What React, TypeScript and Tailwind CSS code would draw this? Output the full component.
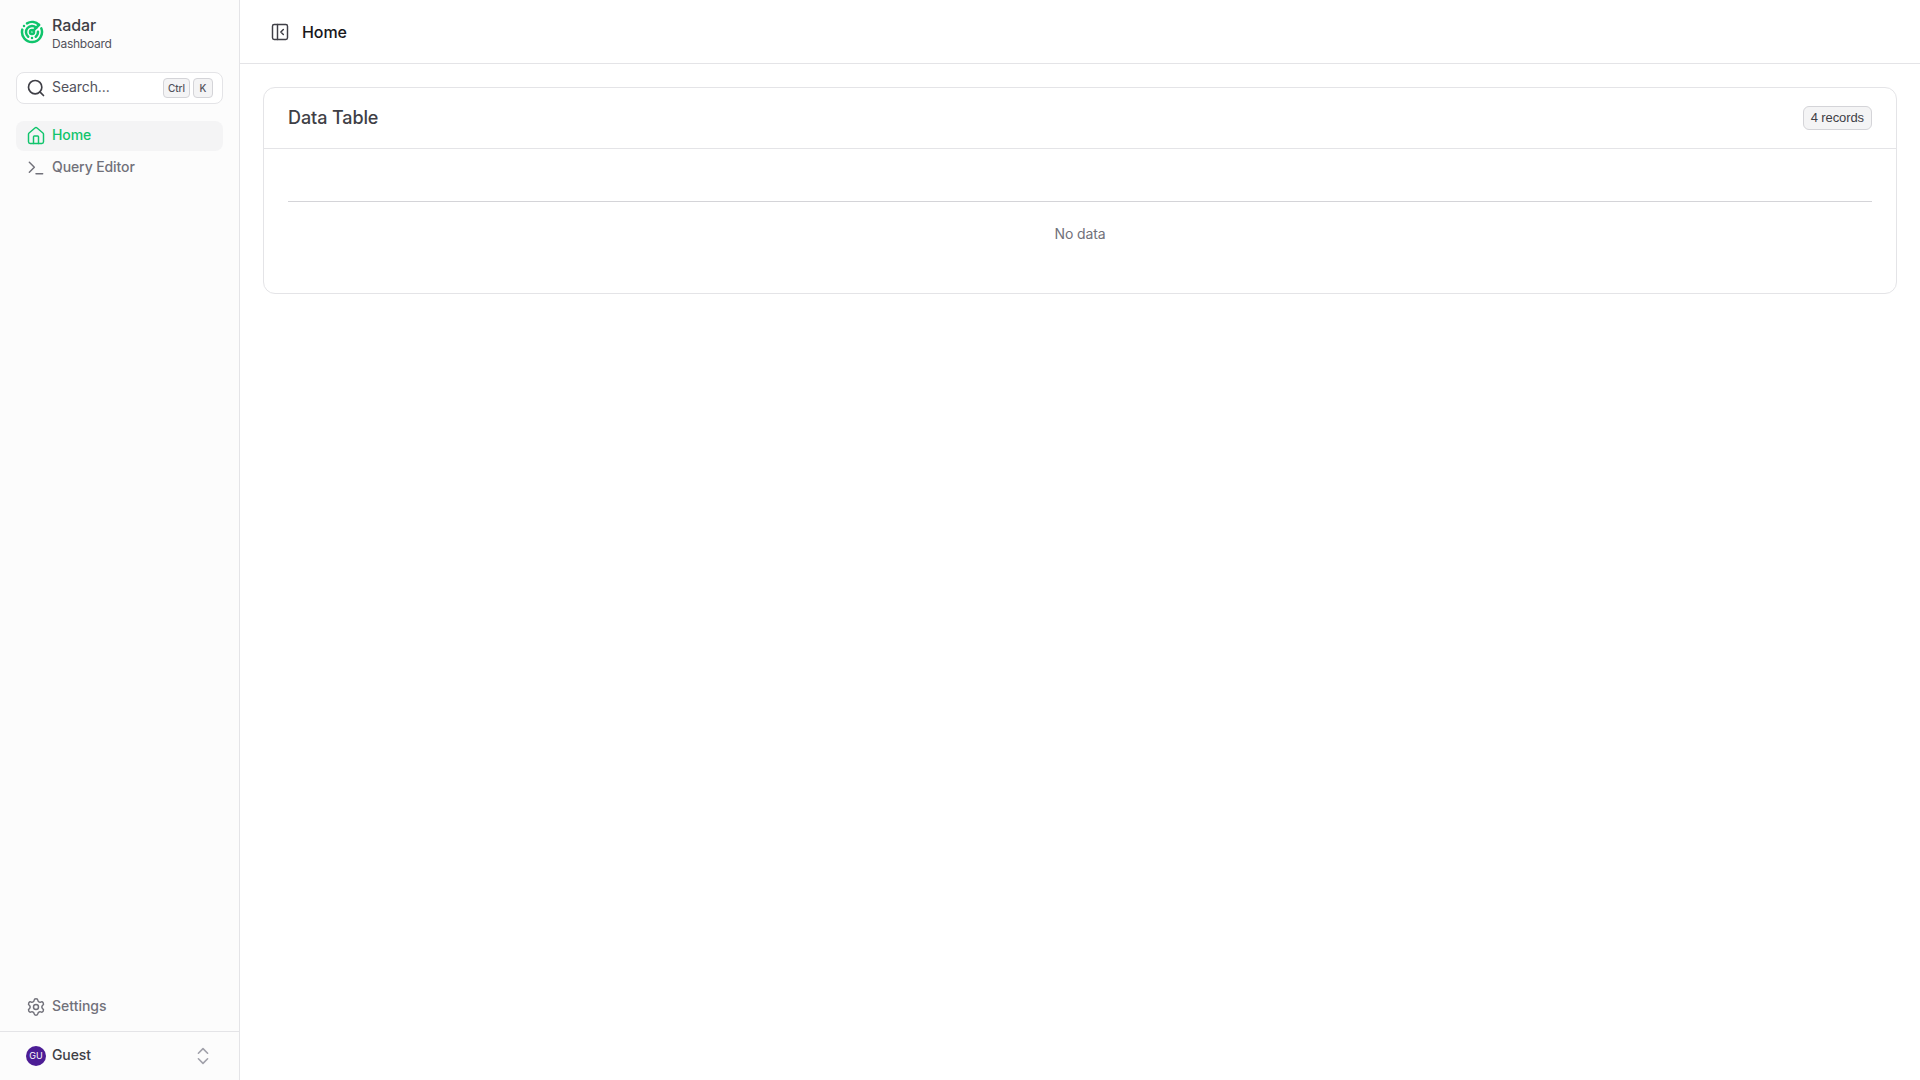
import { ChevronsUpDown, House, PanelLeftClose, Radar, Search, Settings, Terminal } from "lucide-react";

export default function App() {
  return (
    <div className="flex h-screen w-full bg-white font-['Inter',sans-serif] tracking-[-0.1px] text-[#3f3f46]">
      {/* Sidebar */}
      <aside className="flex w-[240px] shrink-0 flex-col border-r border-[#e4e4e7] bg-[#fcfcfc]">
        <div className="flex h-[64px] items-center gap-2 px-5">
          <Radar className="size-6 text-[#10c46c]" strokeWidth={2.5} />
          <div className="flex flex-col pb-[1px]">
            <span className="text-base leading-[24px] font-medium text-[#3f3f46]">Radar</span>
            <span className="text-xs leading-[14px] tracking-[-0.25px] text-[#52525b]">Dashboard</span>
          </div>
        </div>

        <div className="mx-4 mt-[8px] flex h-[32px] items-center gap-[6px] rounded-lg border border-[#e4e4e7] bg-white pr-[9px] pl-[9px]">
          <Search className="size-5 text-[#3f3f46]" strokeWidth={2} />
          <span className="flex-1 pb-[2px] text-sm text-[#52525b]">Search...</span>
          <kbd className="flex h-[20px] w-[27px] items-center justify-center rounded-[4px] border border-[#d4d4d8] bg-[#f4f4f5] font-['Inter',sans-serif] text-[10px] font-medium text-[#52525b]">
            Ctrl
          </kbd>
          <kbd className="-ml-[3px] flex h-[20px] w-[20px] items-center justify-center rounded-[4px] border border-[#d4d4d8] bg-[#f4f4f5] font-['Inter',sans-serif] text-[10px] font-medium text-[#52525b]">
            K
          </kbd>
        </div>

        <nav className="mx-4 mt-[17px] flex flex-col gap-[2px]">
          <a className="flex h-[30px] items-center gap-[6px] rounded-lg bg-[#f4f4f5] px-[10px] text-sm font-medium text-[#10c46c]">
            <House className="size-5" strokeWidth={1.75} />
            <span className="pb-[2px]">Home</span>
          </a>
          <a className="flex h-[30px] items-center gap-[6px] rounded-lg px-[10px] text-sm font-medium text-[#71717a]">
            <Terminal className="size-5" strokeWidth={1.75} />
            <span className="pb-[2px]">Query Editor</span>
          </a>
        </nav>

        <div className="mt-auto px-4 pb-[9px]">
          <a className="flex h-[30px] items-center gap-[6px] px-[10px] text-sm font-medium tracking-normal text-[#71717a]">
            <Settings className="size-5" strokeWidth={1.75} />
            <span className="pb-[2px]">Settings</span>
          </a>
        </div>

        <div className="flex h-[49px] items-center border-t border-[#e4e4e7] pr-[25px] pl-[26px]">
          <div className="flex size-5 items-center justify-center rounded-full bg-[#4c1d95] text-[9px] tracking-normal text-white">GU</div>
          <span className="ml-[6px] flex-1 pb-[2px] text-sm font-medium text-[#3f3f46]">Guest</span>
          <ChevronsUpDown className="size-[22px] text-[#a1a1aa]" strokeWidth={1.75} />
        </div>
      </aside>

      {/* Main */}
      <main className="flex min-w-0 flex-1 flex-col">
        <header className="flex h-[64px] items-center gap-[12px] border-b border-[#e4e4e7] px-[30px]">
          <PanelLeftClose className="size-5 text-[#3f3f46]" strokeWidth={1.75} />
          <span className="text-base font-medium text-[#18181b]">Home</span>
        </header>

        <div className="p-[23px]">
          <section className="rounded-xl border border-[#e4e4e7] bg-white">
            <div className="flex h-[61px] items-center justify-between border-b border-[#e4e4e7] px-6">
              <h2 className="text-lg font-medium text-[#3f3f46]">Data Table</h2>
              <span className="flex h-[24px] items-center rounded-md border border-[#d4d4d8] bg-[#f4f4f5] px-[7px] pb-[1px] font-['Liberation_Sans',sans-serif] text-[13px] tracking-[-0.1px] text-[#3f3f46]">
                4 records
              </span>
            </div>
            <div className="px-6 pb-[49px]">
              <div className="mt-[52px] border-t border-[#d4d4d8] pt-[22px] text-center text-sm leading-[20px] text-[#71717a]">
                No data
              </div>
            </div>
          </section>
        </div>
      </main>
    </div>
  );
}
